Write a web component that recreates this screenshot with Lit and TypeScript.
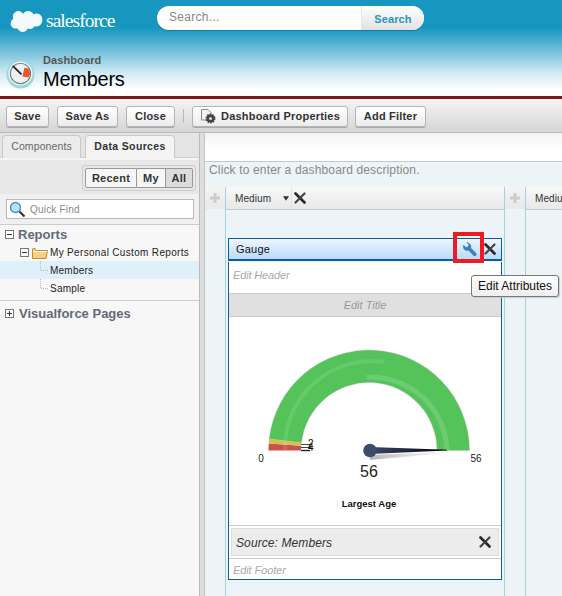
import { LitElement, html, css, svg } from "lit";
import { customElement } from "lit/decorators.js";

const xIcon = (s: number) => html`<svg class="x" width=${s} height=${s} viewBox="0 0 14 14"><path d="M2.500 2.500 L11.500 11.500" stroke="#2b2b2b" stroke-width="2.800" stroke-linecap="round" fill="none"/><path d="M11.500 2.500 L2.500 11.500" stroke="#444" stroke-width="2.200" stroke-linecap="round" fill="none"/></svg>`;
const box = (plus: boolean) => html`<svg width="9" height="9" viewBox="0 0 9 9"><rect x=".5" y=".5" width="8" height="8" fill="#fff" stroke="#777"/><path d=${plus ? "M2 4.500H7M4.500 2V7" : "M2 4.500H7"} stroke="#333"/></svg>`;
const conn = () => html`<svg class="conn" width="9" height="18" viewBox="0 0 9 18"><path d="M.5 0V9.500H9" stroke="#bbb" stroke-dasharray="1 1" fill="none"/></svg>`;

@customElement("app-root")
export class AppRoot extends LitElement {
  static styles = css`
    :host { display: block; width: 562px; height: 596px; overflow: hidden; position: relative; font-family: "Liberation Sans", Arial, sans-serif; background: #fff; color: #222; }
    * { box-sizing: border-box; }
    .header { height: 96px; background: linear-gradient(#1797c0 0, #1797c0 28px, #6fbdd8 50px, #d5ecf4 74px, #fff 90px); display: flex; flex-direction: column; }
    .top { display: flex; height: 44px; padding: 6px 0 0 10px; }
    .logo { display: flex; width: 147px; padding-top: 3px; gap: 3px; align-items: flex-start; }
    .logo span { color: #fff; font: 19.500px/23px "Liberation Serif", serif; letter-spacing: -.95px; }
    .search { display: flex; width: 267px; height: 24px; border-radius: 12px; background: #fff; overflow: hidden; box-shadow: 0 1px 1px #0d7fa3; }
    .search .in { flex: 1; padding-left: 12px; font-size: 12px; line-height: 23px; color: #888; letter-spacing: .3px; }
    .search .btn { width: 63px; background: linear-gradient(#fff, #e2e2e2); border-left: 1px solid #e6e6e6; color: #2a94bd; font-size: 11px; font-weight: bold; text-align: center; line-height: 26px; letter-spacing: .1px; }
    .title { display: flex; padding: 10px 0 0 6px; gap: 8px; }
    .title .icon { margin-top: 5px; }
    .title .sub { font-size: 11px; font-weight: bold; color: #555; line-height: 12px; letter-spacing: .1px; }
    .title .name { font-size: 20px; line-height: 24px; color: #000; margin-top: 1px; letter-spacing: -.25px; }
    .rule { height: 3px; background: #7f1518; }
    .toolbar { height: 34px; background: linear-gradient(#f4f4f4, #d6d6d6); border-bottom: 1px solid #bbb; display: flex; align-items: center; padding: 1px 0 0 6px; gap: 8px; }
    .tb { height: 21px; border: 1px solid #b5b5b5; border-radius: 3px; background: linear-gradient(#fff, #ececec); font-size: 11px; font-weight: bold; color: #333; display: flex; align-items: center; justify-content: center; gap: 4px; letter-spacing: .2px; box-shadow: 0 1px 0 #aaa; }
    .tb.last { margin-left: -1px; }
    .sep { width: 1px; height: 14px; background: #b8b8b8; }
    .main { display: flex; height: 463px; }
    .side { width: 200px; background: #f7f7f7; display: flex; flex-direction: column; border-right: 1px solid #bbb; }
    .split { width: 5px; background: #dedede; border-right: 1px solid #c4c4c4; }
    .tabs { display: flex; gap: 4px; padding: 2px 0 0 2px; height: 25px; background: #e4e4e4; border-bottom: 1px solid #d2d2d2; }
    .tab { height: 23px; border: 1px solid #c8c8c8; border-bottom: none; border-radius: 4px 4px 0 0; font-size: 10.500px; line-height: 21px; text-align: center; letter-spacing: .1px; color: #666; background: #ececec; }
    .tab.on { background: #f4f4f4; color: #333; font-weight: bold; height: 24px; letter-spacing: .35px; }
    .filter { height: 36px; background: #e8e8e8; border-top: 2px solid #f4f4f4; display: flex; justify-content: flex-end; padding: 5px 3px 0 0; }
    .seg { width: 114px; height: 26px; border: 1px solid #ccc; border-radius: 3px; padding: 2px; display: flex; }
    .seg div { border: 1px solid #999; border-left: none; background: #f6f6f6; font-size: 11px; font-weight: bold; text-align: center; line-height: 19px; color: #333; letter-spacing: .25px; }
    .seg div:first-child { border-left: 1px solid #999; border-radius: 2px 0 0 2px; }
    .seg div:last-child { background: #dcdcdc; border-radius: 0 2px 2px 0; }
    .qf { background: #f0f0f0; padding: 5px 5px 5px 6px; border-bottom: 1px solid #ccc; height: 31px; }
    .qf .inp { height: 20px; background: #fff; border: 1px solid #b8b8b8; display: flex; align-items: center; padding-left: 2px; gap: 4px; font-size: 10px; color: #888; letter-spacing: .2px; }
    .tree { border-bottom: 1px solid #ccc; height: 76px; }
    .row { display: flex; align-items: center; height: 18px; }
    .h { font-size: 13px; font-weight: bold; color: #636a78; }
    .r1 { padding-left: 5px; gap: 4px; }
    .r2 { padding-left: 20px; gap: 3px; font-size: 10px; color: #222; letter-spacing: .33px; }
    .r2 .fold { margin-right: -1px; }
    .r3 { padding-left: 40px; gap: 1px; font-size: 10px; letter-spacing: .22px; color: #222; }
    .r3.sel { background: #e0f0fb; }
    .r1b { padding: 0 0 0 5px; gap: 5px; height: 25px; }
    .canvas { flex: 1; min-width: 0; background: #edf4f7; display: flex; flex-direction: column; }
    .strip { height: 29px; flex: none; background: linear-gradient(#f4f4f4, #fff 60%); border-bottom: 1px solid #c8c8c8; }
    .desc { height: 25px; flex: none; font-size: 12px; line-height: 17px; color: #888; padding-left: 4px; letter-spacing: .15px; }
    .cols { display: flex; flex: 1; min-height: 0; overflow: hidden; }
    .gut { width: 20px; flex: none; }
    .plus { height: 22px; background: linear-gradient(#f4f4f4, #e8e8e8); display: flex; align-items: center; justify-content: center; }
    .col { flex: none; border-left: 1px solid #a5d1de; border-right: 1px solid #a5d1de; width: 280px; }
    .col.next { width: 60px; border-right: none; }
    .ch { height: 23px; background: linear-gradient(#f8f8f8, #e8e8e8); border-bottom: 1px solid #c8c8c8; display: flex; align-items: center; font-size: 10px; color: #333; padding-left: 9px; white-space: nowrap; letter-spacing: .1px; }
    .ch .t { width: 48px; }
    .ch svg.arrow { margin-right: 2px; }
    .ch .d { width: 1px; height: 22px; background: #e2e2e2; margin-right: 1px; }
    .card { margin: 28px 2px 0 2px; width: 274px; position: relative; }
    .ch-bar { height: 23px; border: 1px solid #0b5d9f; border-bottom-width: 2px; background: linear-gradient(#eef6fe, #b9dbf8); display: flex; align-items: center; padding-left: 7px; font-size: 11px; color: #111; letter-spacing: .2px; }
    .ch-bar .sp { flex: 1; }
    .ch-bar .wr { margin-right: 6px; }
    .ch-bar .x { margin-right: 4px; }
    .body { border: 1px solid #0b5d9f; border-top: none; background: #fff; margin-top: 1px; }
    .eh { height: 31px; font: italic 11px/26px "Liberation Sans", sans-serif; color: #aaa; padding-left: 4px; letter-spacing: -.15px; }
    .et { height: 24px; background: #e0e0e0; border-top: 1px solid #ccc; border-bottom: 1px solid #ccc; font: italic 11px/22px "Liberation Sans", sans-serif; color: #999; text-align: center; }
    .chart { height: 208px; display: block; }
    .chart-w { border-bottom: 1px solid #ccc; height: 209px; }
    .src { margin: 2px; height: 28px; background: #ececec; border: 1px solid #ddd; display: flex; align-items: center; justify-content: space-between; font: italic 12px "Liberation Sans", sans-serif; color: #333; padding: 0 6px 0 4px; letter-spacing: .1px; }
    .src span { padding-top: 2px; }
    .ef { border-top: 1px solid #ccc; height: 21px; font: italic 11px/23px "Liberation Sans", sans-serif; color: #aaa; padding-left: 4px; letter-spacing: -.1px; }
    .redbox { position: absolute; left: 225px; top: -6px; width: 31px; height: 31px; border: 4px solid #ed1c24; }
    .tip { position: absolute; left: 243px; top: 37px; width: 88px; height: 22px; background: linear-gradient(#fff, #eee); border: 1px solid #777; border-radius: 3px; font: 12px/20px "Liberation Sans", sans-serif; color: #111; text-align: center; z-index: 3; white-space: nowrap; box-shadow: 1px 1px 1px #ccc; }
  `;

  gauge() {
    const c = 140, cy = 133.5, needle = 141;
    const pt = (r: number, a: number) => [c + r * Math.cos(a * Math.PI / 180), cy - r * Math.sin(a * Math.PI / 180)].map(v => v.toFixed(2)).join(" ");
    const seg = (a0: number, a1: number, col: string) => svg`<path d="M${pt(100.5, a0)} A100.500 100.500 0 0 1 ${pt(100.5, a1)} L${pt(68, a1)} A68 68 0 0 0 ${pt(68, a0)} Z" fill=${col}/>`;
    const band = (r0: number, a0: number, r1: number, a1: number, w: number, op: number) => svg`<path d="M${pt(r0, a0)} A${(r0 + r1) / 2} ${(r0 + r1) / 2} 0 0 1 ${pt(r1, a1)}" fill="none" stroke="#fff" stroke-opacity=${op} stroke-width=${w}/>`;
    return html`<svg class="chart" width="272" height="208" viewBox="0 0 272 208" font-family="Liberation Sans, sans-serif" fill="#111">
      <defs>
        <linearGradient id="nd" x1="0" x2="1" y1="0" y2="0"><stop offset="0" stop-color="#3c4a6c"/><stop offset="1" stop-color="#000"/></linearGradient>
        <linearGradient id="sh" x1="0" x2="1" y1="0" y2="0"><stop offset="0" stop-color="#777" stop-opacity=".55"/><stop offset="1" stop-color="#aaa" stop-opacity="0"/></linearGradient>
      </defs>
      <path d="M${pt(100.5, 173.4)} A100.500 100.500 0 0 1 ${pt(100.5, 0)} L${pt(68, 0)} A68 68 0 0 0 ${pt(68, 173.4)} Z" fill="#54c45a" stroke="#b9b9b9" stroke-width=".4"/>
      ${seg(180, 176, "#c9524c")}
      ${seg(176, 173.4, "#cdc352")}
      ${band(84, 180, 90, 80, 4, .1)}
      ${band(73, 92, 78, 0, 5, .15)}
      <path d="M72 127.500H82M72 130.500H82" stroke="#444" stroke-width="1"/>
      <path d="M72 133.500H81" stroke="#222" stroke-width="1.400"/>
      <text x="79" y="130" font-size="10">2</text>
      <text x="79" y="134" font-size="10">4</text>
      <path d="M${needle} 138 L224 134.500 V135.500 L${needle} 143Z" fill="url(#sh)"/>
      <path d="M${needle} 130 L218 132.800 V133.600 L${needle} 137Z" fill="url(#nd)"/>
      <circle cx=${needle} cy=${cy} r="6.800" fill="#3c4a6c"/>
      <text x="32" y="145" font-size="10" text-anchor="middle" fill="#222">0</text>
      <text x="247" y="145" font-size="10" text-anchor="middle" fill="#222">56</text>
      <text x=${c} y="160" font-size="16" text-anchor="middle" fill="#222">56</text>
      <text x=${c} y="190" font-size="9.500" font-weight="bold" text-anchor="middle">Largest Age</text>
    </svg>`;
  }

  render() {
    return html`
      <div class="header">
        <div class="top">
          <div class="logo">
            <svg width="33" height="24" viewBox="0 0 33 24"><defs><filter id="bl"><feGaussianBlur stdDeviation=".5"/></filter></defs><path filter="url(#bl)" d="M13 5c1.200-1.800 3-3 5-3 2.600 0 4.600 1.300 5.600 3.200 1-.4 1.800-.6 2.800-.6 3.600 0 6 2.800 6 6.400 0 3.800-2.800 6.500-6.300 6.500-.5 0-1-.1-1.500-.2-.8 1.600-2.600 2.700-4.500 2.700-.8 0-1.500-.2-2.200-.5-.9 2-2.800 3.400-5.100 3.400-2.400 0-4.400-1.500-5.200-3.500-.4.1-.8.1-1.200.1C3 19.900.7 17.500.7 14.500c0-2 1.100-3.800 2.700-4.700-.3-.7-.5-1.500-.5-2.300C2.900 4.500 5.400 2 8.500 2c1.800 0 3.400.9 4.500 3Z" fill="#f4fafc"/></svg>
            <span>salesforce</span>
          </div>
          <div class="search"><div class="in">Search...</div><div class="btn">Search</div></div>
        </div>
        <div class="title">
          <svg class="icon" width="29" height="30" viewBox="0 0 30 31">
            <circle cx="15" cy="16" r="14.500" fill="#9ad8dc"/><circle cx="15" cy="15" r="12.500" fill="#e8f4f6"/><circle cx="15" cy="15" r="11" fill="#6a7478"/><circle cx="15" cy="15" r="10" fill="#f0f0f0"/>
            <path d="M19 9l5 1 1 6-2 3-6-1 1-4z" fill="#e3572a"/><path d="M7 7l9 9" stroke="#222" stroke-width="1.800"/>
          </svg>
          <div><div class="sub">Dashboard</div><div class="name">Members</div></div>
        </div>
      </div>
      <div class="rule"></div>
      <div class="toolbar">
        <div class="tb" style="width:43px">Save</div>
        <div class="tb" style="width:61px">Save As</div>
        <div class="tb" style="width:49px">Close</div>
        <div class="sep"></div>
        <div class="tb" style="width:156px">
          <svg width="17" height="15" viewBox="0 0 17 15"><path d="M1.500 .5H8l3 3V11H1.500z" fill="#f2f2f2" stroke="#8a8a9c"/><circle cx="10.500" cy="9.500" r="4" fill="#444" stroke="#444" stroke-width="2" stroke-dasharray="1.500 1"/><circle cx="10.500" cy="9.500" r="1.500" fill="#ddd"/></svg>
          Dashboard Properties
        </div>
        <div class="tb last" style="width:71px">Add Filter</div>
      </div>
      <div class="main">
        <div class="side">
          <div class="tabs"><div class="tab" style="width:79px">Components</div><div class="tab on" style="width:90px">Data Sources</div></div>
          <div class="filter"><div class="seg"><div style="width:52px">Recent</div><div style="width:29px">My</div><div style="width:27px">All</div></div></div>
          <div class="qf"><div class="inp">
            <svg width="17" height="17" viewBox="0 0 17 17"><circle cx="6.500" cy="6.500" r="5" fill="#bde0f7" stroke="#4d8fc4" stroke-width="1.400"/><path d="M10.500 10.500l5 5" stroke="#333" stroke-width="2.200"/></svg>
            Quick Find</div></div>
          <div class="tree">
            <div class="row r1 h">${box(false)}<span>Reports</span></div>
            <div class="row r2">${box(false)}
              <svg class="fold" width="16" height="13" viewBox="0 0 16 13"><path d="M.5 3V12.500H14l1.500-8H4L3 2.500H1z" fill="#f7cf86" stroke="#c08a30"/><path d="M1 5.500H15" stroke="#fff"/></svg>
              <span>My Personal Custom Reports</span></div>
            <div class="row r3 sel">${conn()}<span>Members</span></div>
            <div class="row r3">${conn()}<span>Sample</span></div>
          </div>
          <div class="row r1b h">${box(true)}<span>Visualforce Pages</span></div>
        </div>
        <div class="split"></div>
        <div class="canvas">
          <div class="strip"></div>
          <div class="desc">Click to enter a dashboard description.</div>
          <div class="cols">
            <div class="gut"><div class="plus"><svg width="10" height="10" viewBox="0 0 10 10"><path d="M5 0V10M0 5H10" stroke="#ccc" stroke-width="3"/></svg></div></div>
            <div class="col">
              <div class="ch"><span class="t">Medium</span><svg class="arrow" width="6" height="5" viewBox="0 0 7 5"><path d="M0 0H7L3.500 5Z" fill="#333"/></svg><span class="d"></span>${xIcon(14)}</div>
              <div class="card">
                <div class="ch-bar"><span>Gauge</span><span class="sp"></span>
                  <svg class="wr" width="16" height="16" viewBox="0 0 16 16"><path d="M5.200 1.200 7.600 3.600 6.900 5.500 5 6.200 2.500 3.800C1.700 5.400 2 7.500 3.400 8.700 4.600 9.800 6.200 10 7.500 9.500L12.300 14.600C13.100 15.400 14.300 15.400 15 14.700 15.700 14 15.700 12.900 15 12.100L10.100 7.100C10.500 5.700 10.200 4.100 9.100 2.900 7.900 1.600 6.400 1 5.200 1.200Z" fill="#3b82c4"/></svg>
                  ${xIcon(14)}</div>
                <div class="body">
                  <div class="eh">Edit Header</div>
                  <div class="et">Edit Title</div>
                  <div class="chart-w">${this.gauge()}</div>
                  <div class="src"><span>Source: Members</span>${xIcon(14)}</div>
                  <div class="ef">Edit Footer</div>
                </div>
                <div class="redbox"></div>
                <div class="tip">Edit Attributes</div>
              </div>
            </div>
            <div class="gut"><div class="plus"><svg width="10" height="10" viewBox="0 0 10 10"><path d="M5 0V10M0 5H10" stroke="#ccc" stroke-width="3"/></svg></div></div>
            <div class="col next"><div class="ch">Medium</div></div>
          </div>
        </div>
      </div>
    `;
  }
}
